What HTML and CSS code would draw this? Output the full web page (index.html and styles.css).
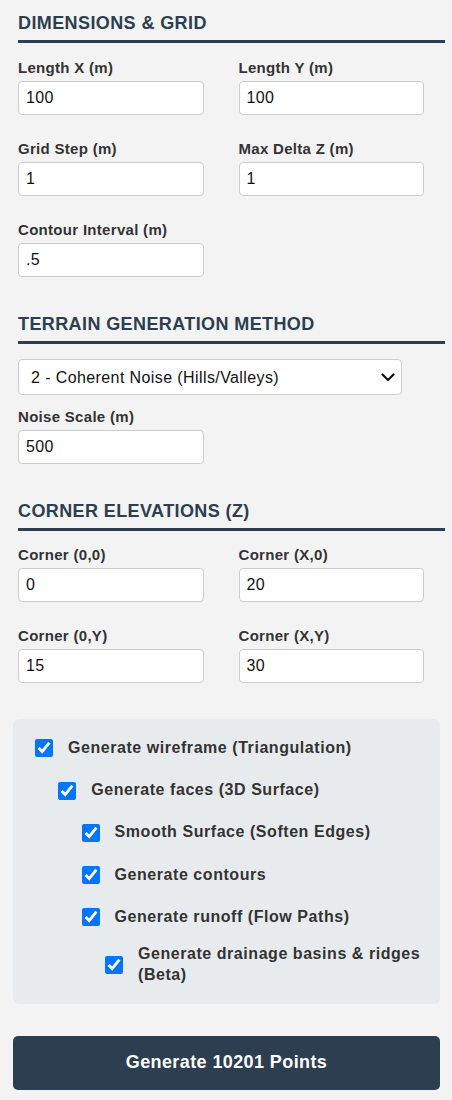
FILE: index.html
```html
<!DOCTYPE html>
<html lang="en">
<head>
<meta charset="utf-8">
<title>Terrain Generator</title>
<link rel="stylesheet" href="styles.css">
</head>
<body>
<div class="page">
  <section class="section">
    <h2 class="section-title">DIMENSIONS &amp; GRID</h2>
    <div class="grid">
      <div class="field"><label class="field-label">Length X (m)</label><input class="text-input" type="text" value="100"></div>
      <div class="field"><label class="field-label">Length Y (m)</label><input class="text-input" type="text" value="100"></div>
      <div class="field"><label class="field-label">Grid Step (m)</label><input class="text-input" type="text" value="1"></div>
      <div class="field"><label class="field-label">Max Delta Z (m)</label><input class="text-input" type="text" value="1"></div>
      <div class="field"><label class="field-label">Contour Interval (m)</label><input class="text-input" type="text" value=".5"></div>
    </div>
  </section>

  <section class="section">
    <h2 class="section-title">TERRAIN GENERATION METHOD</h2>
    <div class="select-wrap">
      <select class="method-select">
        <option>2 - Coherent Noise (Hills/Valleys)</option>
      </select>
      <svg class="chevron" width="14" height="9" viewBox="0 0 14 9" aria-hidden="true"><path d="M1.5 1.5 L7 7 L12.5 1.5" fill="none" stroke="#111" stroke-width="2.2" stroke-linecap="round" stroke-linejoin="round"/></svg>
    </div>
    <div class="grid">
      <div class="field"><label class="field-label">Noise Scale (m)</label><input class="text-input" type="text" value="500"></div>
    </div>
  </section>

  <section class="section">
    <h2 class="section-title">CORNER ELEVATIONS (Z)</h2>
    <div class="grid">
      <div class="field"><label class="field-label">Corner (0,0)</label><input class="text-input" type="text" value="0"></div>
      <div class="field"><label class="field-label">Corner (X,0)</label><input class="text-input" type="text" value="20"></div>
      <div class="field"><label class="field-label">Corner (0,Y)</label><input class="text-input" type="text" value="15"></div>
      <div class="field"><label class="field-label">Corner (X,Y)</label><input class="text-input" type="text" value="30"></div>
    </div>
  </section>

  <div class="options">
    <label class="check"><input class="check-box" type="checkbox" checked><span class="check-text">Generate wireframe (Triangulation)</span></label>
    <label class="check level-1"><input class="check-box" type="checkbox" checked><span class="check-text">Generate faces (3D Surface)</span></label>
    <label class="check level-2"><input class="check-box" type="checkbox" checked><span class="check-text">Smooth Surface (Soften Edges)</span></label>
    <label class="check level-2"><input class="check-box" type="checkbox" checked><span class="check-text">Generate contours</span></label>
    <label class="check level-2"><input class="check-box" type="checkbox" checked><span class="check-text">Generate runoff (Flow Paths)</span></label>
    <label class="check level-3"><input class="check-box" type="checkbox" checked><span class="check-text">Generate drainage basins &amp; ridges (Beta)</span></label>
  </div>

  <button class="generate-btn" type="button">Generate 10201 Points</button>
</div>
</body>
</html>
```

FILE: styles.css
```css
* {
  box-sizing: border-box;
}

html, body {
  margin: 0;
  padding: 0;
  background: #f3f3f3;
}

body {
  font-family: "Liberation Sans", Arial, sans-serif;
  color: #333;
}

.page {
  padding: 12px 12px 20px 13px;
}

.section {
  margin: 0 -5px 36px 5px;
}

.section-title {
  margin: 0 0 15.5px 0;
  font-size: 18px;
  line-height: 22px;
  font-weight: bold;
  letter-spacing: 0.4px;
  color: #2c3e50;
  padding-bottom: 6px;
  border-bottom: 3px solid #2c3e50;
}

.grid {
  display: grid;
  grid-template-columns: 1fr 1fr;
  column-gap: 14px;
  row-gap: 25px;
}

.field {
  display: flex;
  flex-direction: column;
}

.field-label {
  display: block;
  font-size: 15px;
  line-height: 18px;
  font-weight: bold;
  letter-spacing: 0.3px;
  color: #333;
  margin-bottom: 4px;
}

.text-input {
  width: 90%;
  height: 34px;
  padding: 0 7px;
  border: 1px solid #ccc;
  border-radius: 4px;
  background: #fff;
  font-family: "Liberation Sans", Arial, sans-serif;
  font-size: 16px;
  letter-spacing: 0.4px;
  color: #111;
  outline: none;
}

.select-wrap {
  position: relative;
  width: 90%;
  margin-bottom: 12.5px;
}

.method-select {
  display: block;
  width: 100%;
  height: 36px;
  padding: 0 30px 0 12px;
  border: 1px solid #ccc;
  border-radius: 4px;
  background: #fff;
  font-family: "Liberation Sans", Arial, sans-serif;
  font-size: 16px;
  letter-spacing: 0.4px;
  color: #111;
  appearance: none;
  -webkit-appearance: none;
  outline: none;
}

.chevron {
  position: absolute;
  right: 7px;
  top: 14px;
  pointer-events: none;
}

.options {
  margin-top: 31px;
  background: #e8ebee;
  border-radius: 6px;
  padding: 14px 12px 6px 22px;
}

.check {
  display: flex;
  align-items: center;
  gap: 15px;
  min-height: 30.6px;
  margin-bottom: 11.7px;
  cursor: pointer;
}

.level-1 {
  padding-left: 23.3px;
}

.level-2 {
  padding-left: 46.6px;
}

.level-3 {
  padding-left: 70px;
}

.check-box {
  flex: 0 0 auto;
  width: 18px;
  height: 18px;
  margin: 0;
  accent-color: #0075ff;
}

.check-text {
  font-size: 16px;
  line-height: 20.8px;
  font-weight: bold;
  letter-spacing: 0.55px;
  color: #333;
}

.generate-btn {
  display: block;
  width: 100%;
  height: 54px;
  margin-top: 32px;
  border: none;
  border-radius: 5px;
  background: #2c3e50;
  color: #fff;
  font-family: "Liberation Sans", Arial, sans-serif;
  font-size: 18px;
  font-weight: bold;
  letter-spacing: 0.4px;
  cursor: pointer;
}
```
